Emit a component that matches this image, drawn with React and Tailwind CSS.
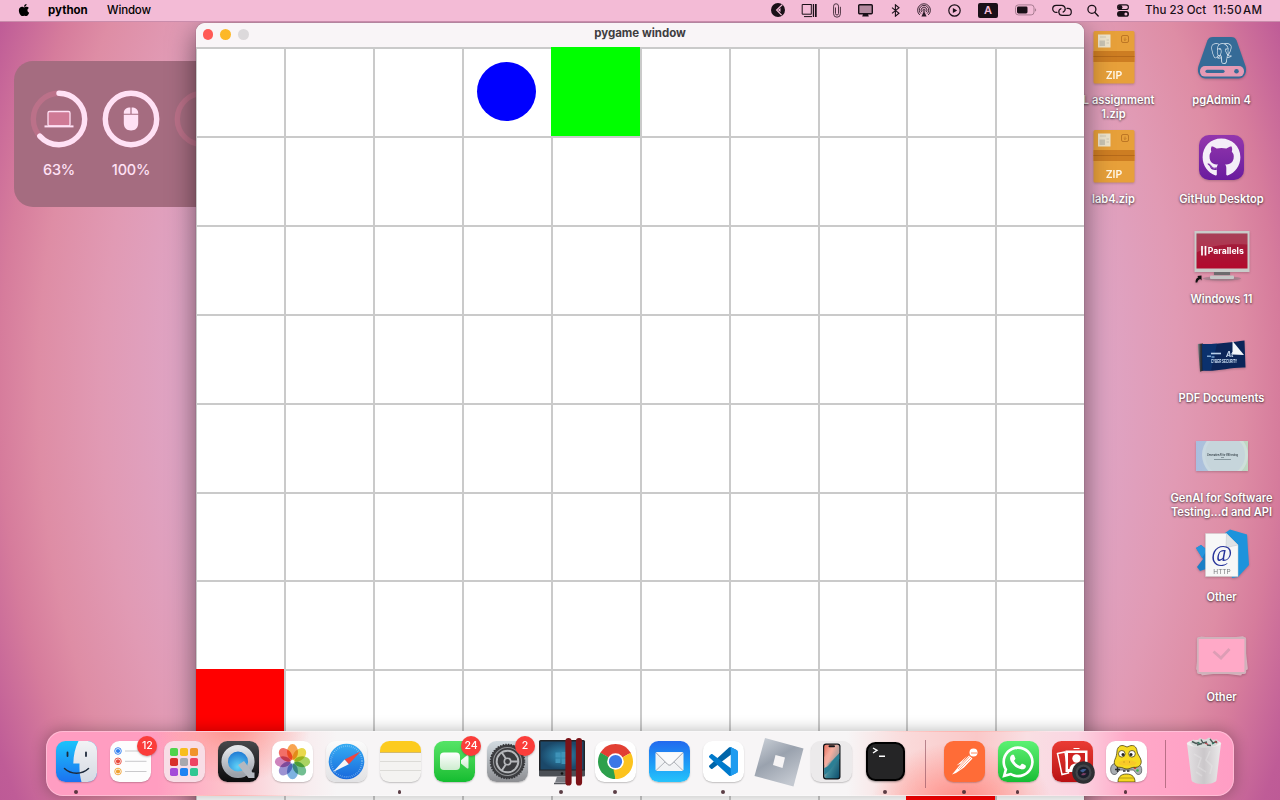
import React from "react";
import { FaApple, FaGithub, FaWhatsapp } from "react-icons/fa";
import { SiPostgresql } from "react-icons/si";

/* ---------- menu bar ---------- */

const MenuIcon = ({ w, children }) => (
  <div className={`flex h-full items-center justify-center ${w}`}>{children}</div>
);

function MenuBar() {
  return (
    <header className="relative z-40 flex h-[21.5px] w-full items-center border-b border-[#c98cab] bg-[#f3bbd6] text-[11.5px] text-[#1a1018]">
      <div className="flex w-[48px] justify-center">
        <FaApple className="h-[14px] w-[14px] text-black" />
      </div>
      <div className="w-[59px] font-bold text-black">python</div>
      <div className="w-[655px] font-medium tracking-[-0.15px] text-black">Window</div>
      <MenuIcon w="w-[32px]">
        <svg width="14" height="14" viewBox="0 0 14 14">
          <circle cx="7" cy="7" r="7" fill="#1a1018" />
          <path d="M11.200 1.800 5.600 7l5 5.200" stroke="#f3bbd6" strokeWidth="1.200" fill="none" />
          <path d="M9.500 5v4L6.800 7z" fill="#f3bbd6" />
        </svg>
      </MenuIcon>
      <MenuIcon w="w-[30px]">
        <svg width="16" height="15" viewBox="0 0 16 15" fill="none" stroke="#1a1018">
          <path d="M10 1.500H1.200v9.700H10M3 13.600h8M10.300 1v10.500" strokeWidth="1" />
          <path d="M12.400 1v13" strokeWidth="1.200" />
          <path d="M14.800 1v13" strokeWidth="1.800" />
        </svg>
      </MenuIcon>
      <MenuIcon w="w-[26px]">
        <svg width="8" height="15" viewBox="0 0 8 15" fill="none" stroke="#3a2531" strokeWidth=".9">
          <path d="M2.500 4.500v6a1.500 1.500 0 0 0 3 0V3.200a2.400 2.400 0 0 0-4.900 0v7.600a3.400 3.400 0 0 0 6.800 0V3.800" />
        </svg>
      </MenuIcon>
      <MenuIcon w="w-[30px]">
        <svg width="15" height="13" viewBox="0 0 15 13">
          <rect x=".7" y=".7" width="13.600" height="9" rx="1" fill="#b48a9f" stroke="#1a1018" strokeWidth="1.400" />
          <path d="M5 10h5l.8 2.500H4.200z" fill="#1a1018" />
        </svg>
      </MenuIcon>
      <MenuIcon w="w-[30px]">
        <svg width="9" height="13" viewBox="0 0 9 13" fill="none" stroke="#1a1018" strokeWidth="1.100">
          <path d="M1 3.600l7 5.600-3.600 3V.8L8 3.800 1 9.400" />
        </svg>
      </MenuIcon>
      <MenuIcon w="w-[28px]">
        <svg width="14" height="14" viewBox="0 0 14 14" fill="none" stroke="#2a1a26" strokeWidth=".9">
          <path d="M2.800 12a6.400 6.400 0 1 1 8.400 0" />
          <path d="M3.900 10.600a4.700 4.700 0 1 1 6.200 0" />
          <path d="M5 9.200a2.900 2.900 0 1 1 4 0" />
          <circle cx="7" cy="7.200" r="1.100" />
          <path d="M7 8 9.600 13.400H4.400z" fill="#2a1a26" stroke="none" />
        </svg>
      </MenuIcon>
      <MenuIcon w="w-[32px]">
        <svg width="13" height="13" viewBox="0 0 13 13">
          <circle cx="6.500" cy="6.500" r="5.700" fill="none" stroke="#1a1018" strokeWidth="1.200" />
          <path d="M4.900 3.900v5.200L9.200 6.500z" fill="#1a1018" />
        </svg>
      </MenuIcon>
      <MenuIcon w="w-[36px]">
        <div className="flex h-[14.500px] w-[19.500px] items-center justify-center rounded-[2px] bg-[#1a1018] text-[11px] font-semibold text-[#f3bbd6]">A</div>
      </MenuIcon>
      <MenuIcon w="w-[40px]">
        <svg width="22" height="12" viewBox="0 0 22 12">
          <rect x=".5" y=".9" width="18.500" height="10" rx="2.800" fill="none" stroke="#a77c91" />
          <rect x="2" y="2.400" width="10.500" height="7" rx="1.400" fill="#1a1018" />
          <path d="M20 4.200v3.400c1.600-.5 1.600-2.900 0-3.400z" fill="#a77c91" />
        </svg>
      </MenuIcon>
      <MenuIcon w="w-[32px]">
        <svg width="20" height="13" viewBox="0 0 20 13" fill="none" stroke="#1a1018" strokeWidth="1.200" strokeLinecap="round">
          <path d="M5 8.400h-.8a3.500 3.500 0 0 1 0-7h5.600a3.500 3.500 0 0 1 1.300 6.700" />
          <path d="M15 4.400h.8a3.500 3.500 0 0 1 0 7h-5.600a3.500 3.500 0 0 1-1.300-6.700" />
        </svg>
      </MenuIcon>
      <MenuIcon w="w-[30px]">
        <svg width="12" height="13" viewBox="0 0 12 13" fill="none" stroke="#1a1018" strokeWidth="1.300" strokeLinecap="round">
          <circle cx="4.900" cy="5.300" r="4" />
          <path d="M7.900 8.500 11.200 12" />
        </svg>
      </MenuIcon>
      <MenuIcon w="w-[29px]">
        <svg width="12" height="13" viewBox="0 0 12 13">
          <rect x=".6" y=".9" width="10.800" height="4.600" rx="2.300" fill="#f3bbd6" stroke="#1a1018" strokeWidth="1.100" />
          <circle cx="3.200" cy="3.200" r="2.200" fill="#1a1018" />
          <rect x="0" y="7" width="12" height="5.800" rx="2.900" fill="#1a1018" />
          <circle cx="8.900" cy="9.900" r="1.500" fill="#f3bbd6" />
        </svg>
      </MenuIcon>
      <div className="ml-2 flex items-center whitespace-nowrap font-medium">
        <span className="w-[68px]">Thu 23 Oct</span>
        <span className="tracking-[0.25px]">11:50&#8202;AM</span>
      </div>
    </header>
  );
}

/* ---------- battery widget ---------- */

function Ring({ percent, children, label }) {
  const c = 2 * Math.PI * 25.7;
  return (
    <div className="flex w-[72px] shrink-0 flex-col items-center">
      <svg width="58" height="58" viewBox="0 0 58 58">
        <circle cx="29" cy="29" r="25.700" fill="none" stroke="#bb7189" strokeWidth="5.400" />
        {percent > 0 && (
          <circle cx="29" cy="29" r="25.700" fill="none" stroke="#ffe1f5" strokeWidth="5.400" strokeLinecap={percent < 100 ? "round" : "butt"} strokeDasharray={`${(c * percent) / 100} ${c}`} transform="rotate(-90 29 29)" />
        )}
        {children}
      </svg>
      <div className="mt-[12px] text-[14.500px] leading-[20px] font-medium tracking-[-0.200px] text-[#ffe1f5]">{label}</div>
    </div>
  );
}

function BatteryWidget() {
  return (
    <section className="absolute top-[39.500px] left-[14px] z-10 flex h-[146px] w-[300px] rounded-[19px] bg-[#a56c80] pt-[28.500px] pl-[9px]">
      <Ring percent={63} label="63%">
        <rect x="18" y="21.500" width="22" height="14.500" rx="1.500" fill="#cf7a96" stroke="#ffe1f5" strokeWidth="1.300" />
        <path d="M14.500 36.400h29" stroke="#ffe1f5" strokeWidth="2" />
      </Ring>
      <Ring percent={100} label="100%">
        <path d="M28.400 17.400v6.300h-6.600v-.7c0-3.600 2.600-5.600 6.600-5.600zM29.600 17.400v6.300h6.600v-.7c0-3.600-2.600-5.600-6.600-5.600z" fill="#ffe1f5" />
        <path d="M21.800 24.800h14.400V33c0 5-2.700 7.400-7.200 7.400s-7.200-2.400-7.200-7.400z" fill="#ffe1f5" />
      </Ring>
      <Ring percent={0} label="" />
    </section>
  );
}

/* ---------- pygame window ---------- */

const RED_CELLS = [70, 88];
const GREEN_CELL = 4;
const BALL_CELL = 3;

function Cell({ index }) {
  const border = "border-t-2 border-l-2 border-[#cacaca]";
  if (index === GREEN_CELL) return <div className="bg-[#00ff00]" />;
  if (RED_CELLS.includes(index)) return <div className="bg-[#ff0000]" />;
  if (index === BALL_CELL)
    return (
      <div className={`flex items-center justify-center pr-[1px] pb-[2px] ${border}`}>
        <div className="h-[59px] w-[59px] rounded-full bg-[#0000ff]" />
      </div>
    );
  return <div className={border} />;
}

function PygameWindow() {
  return (
    <section className="absolute top-[1.500px] left-[196px] z-20 h-[900px] w-[888px] overflow-hidden rounded-t-[9px] bg-white shadow-[0_8px_28px_rgba(0,0,0,0.5),0_0_1px_rgba(0,0,0,0.6)]">
      <div className="flex h-[24px] items-center bg-[#f9f5f7]">
        <div className="flex w-[60px] items-center gap-[7.300px] pb-[1px] pl-[6.500px]">
          <span className="h-[10.500px] w-[10.500px] rounded-full bg-[#ff5a55]" />
          <span className="h-[10.500px] w-[10.500px] rounded-full bg-[#fdb827]" />
          <span className="h-[10.500px] w-[10.500px] rounded-full bg-[#dcd9db]" />
        </div>
        <div className="flex-1 pr-[60px] pb-[2px] text-center text-[11.500px] font-bold text-[#403d3f]">pygame window</div>
      </div>
      <div className="-ml-[0.800px] grid h-[889px] w-[889px] grid-cols-10 grid-rows-10">
        {Array.from({ length: 100 }, (_, i) => (
          <Cell key={i} index={i} />
        ))}
      </div>
    </section>
  );
}

/* ---------- desktop icons ---------- */

function ZipIcon() {
  return (
    <svg className="mb-[2px]" width="42" height="54" viewBox="0 0 42 54">
      <rect x=".5" y="1" width="41" height="52.500" rx="1.500" fill="#e7a03a" />
      <rect x=".5" y="21" width="41" height="11" fill="#cd7d22" />
      <path d="M.5 26.500h41" stroke="#b5691a" strokeWidth="1" />
      <rect x="5" y="4.500" width="12.500" height="13" fill="#ede3cb" />
      <rect x="6.500" y="10.500" width="5.500" height="5.500" fill="#c9c4b4" />
      <path d="M7 7h6M13.500 10h2.500M13.500 13h2.500" stroke="#cfc7b2" />
      <rect x="28.500" y="5.500" width="7" height="7" rx="1.500" fill="none" stroke="#bd7624" />
      <path d="M32 7.500v3M30.700 9.300 32 10.600l1.300-1.300" stroke="#bd7624" fill="none" strokeWidth=".8" />
      <text x="21" y="48.500" textAnchor="middle" fontFamily="Inter, sans-serif" fontSize="10.500" fontWeight="600" fill="#fff8e8">ZIP</text>
    </svg>
  );
}

function PgAdminIcon() {
  return (
    <div className="relative flex h-[44px] w-[50px] justify-center">
      <svg className="absolute inset-0" width="50" height="44" viewBox="0 0 50 44">
        <path d="M16 1h18c3 0 4.500 1 5.600 3.600L48.500 30c2 6-1 12.500-7 12.500h-33c-6 0-9-6.500-7-12.500L10.400 4.600C11.500 2 13 1 16 1z" fill="#356b97" />
        <rect x="3" y="30" width="44" height="10.600" rx="5" fill="#e59ab4" />
        <path d="M10 35.300h16" stroke="#356b97" strokeWidth="3.200" strokeLinecap="round" />
        <circle cx="39.500" cy="35.300" r="2.300" fill="#356b97" />
      </svg>
      <SiPostgresql className="relative mt-[7px] h-[21px] w-[21px] text-[#e6eef5]" />
    </div>
  );
}

function GithubIcon() {
  return (
    <div className="mt-[1px] flex h-[45px] w-[45px] items-center justify-center rounded-[10px] bg-linear-to-b from-[#9436ad] to-[#6a1b9e]">
      <FaGithub className="h-[39px] w-[39px] text-[#f4eef8]" />
    </div>
  );
}

function ParallelsVmIcon() {
  return (
    <svg width="56" height="54" viewBox="0 0 56 54">
      <defs>
        <linearGradient id="vm" x1="0" y1="0" x2="0" y2="1">
          <stop offset="0" stopColor="#9c2540" />
          <stop offset="1" stopColor="#b3092d" />
        </linearGradient>
      </defs>
      <rect x=".5" y="1" width="55" height="41" fill="#c9cbc9" />
      <rect x="2.500" y="3.500" width="51" height="35" fill="url(#vm)" />
      <path d="M2.500 3.500h51v11c-20-1-35 0-51 8z" fill="#fff" opacity=".12" />
      <path d="M20 42h16v3H20z" fill="#6d6a6d" />
      <ellipse cx="28" cy="48.500" rx="19" ry="2.200" fill="#8f7a84" opacity=".6" />
      <rect x="16" y="45.500" width="24" height="3.500" rx="1" fill="#c6c6c6" />
      <path d="M8 16v9.500M11.500 16v9.500" stroke="#fff" strokeWidth="1.700" />
      <text x="13.800" y="24" fontFamily="Inter, sans-serif" fontWeight="700" fontSize="8.600" fill="#fff" textLength="36" lengthAdjust="spacingAndGlyphs">Parallels</text>
      <path d="M1.500 52.500c0-3 1-4.500 2.800-5.200l-1-1.300 4.200-.5v5l-1.200-1.500c-1.800.7-2.600 1.800-3 3.500z" fill="#111" />
    </svg>
  );
}

function PdfStackIcon() {
  return (
    <svg width="50" height="34" viewBox="0 0 50 34">
      <defs>
        <linearGradient id="pf" x1="0" y1="0" x2="1" y2="0"><stop offset="0" stopColor="#8a8f94" /><stop offset=".5" stopColor="#33363b" /><stop offset="1" stopColor="#15181f" /></linearGradient>
      </defs>
      <path d="M.8 5 6 4.500l.5 27L3 32.800z" fill="url(#pf)" />
      <path d="M5 5C20 5.500 35 3 47.500 1.500l1 27C33 28 20 33 5.500 31.500z" fill="#0b2559" />
      <path d="M5 5c5 .2 10 0 15-.6L14 31.500l-8.500 0z" fill="#0c3a7c" opacity=".6" />
      <text x="29" y="18" fontFamily="Inter, sans-serif" fontSize="7" fontWeight="700" fontStyle="italic" fill="#c7d8ee">At</text>
      <path d="M14 14.500h10" stroke="#b9d0ea" strokeWidth="1.600" />
      <path d="M10 17.300h4M14.500 18h3" stroke="#7ea4cf" strokeWidth="1.600" />
      <text x="14" y="24.300" fontFamily="Liberation Sans, sans-serif" fontSize="6" fontWeight="700" fill="#d9ecff" textLength="26" lengthAdjust="spacingAndGlyphs">CYBER SECURITY</text>
      <path d="M35.500 2 47 16l-11.500-.5z" fill="#f3f6fa" />
    </svg>
  );
}

function SlideIcon() {
  return (
    <svg className="mt-[1px]" width="52" height="30" viewBox="0 0 52 30">
      <defs>
        <linearGradient id="sl" x1="0" y1="0" x2="1" y2="0">
          <stop offset="0" stopColor="#a9bde0" />
          <stop offset="1" stopColor="#bfd8c0" />
        </linearGradient>
        <clipPath id="slc"><rect width="52" height="30" /></clipPath>
      </defs>
      <g clipPath="url(#slc)">
        <rect width="52" height="30" fill="url(#sl)" />
        <circle cx="29" cy="14" r="23" fill="#d6e2e4" opacity=".7" />
        <circle cx="29" cy="14" r="20" fill="#c6d5db" />
      </g>
      <text x="11" y="14.700" fontFamily="Inter, sans-serif" fontSize="3" fontWeight="600" fill="#26323a" textLength="31" lengthAdjust="spacingAndGlyphs">Generative AI for SW testing</text>
      <path d="M25 16.500h3M18 18.500h17" stroke="#6c7c84" strokeWidth=".7" />
    </svg>
  );
}

function HttpStackIcon() {
  return (
    <svg className="mb-[2px]" width="54" height="50" viewBox="0 0 54 50">
      <path d="M1 19l5-3 14 11v10L5 42l-3-4 6-8z" fill="#1b7fc6" />
      <path d="M1 19l5-3 6 5-5 8z" fill="#2595dd" />
      <path d="M30 4 35 .5l17 5L54 36 43 48l-6 1z" fill="#1d93dc" />
      <path d="M10.500 4.500h21L43 16v31.500H10.500z" fill="#f7f7f7" stroke="#cfcfcf" strokeWidth=".5" />
      <path d="M31.500 4.500 43 16 31 18.500z" fill="#dfe3e6" stroke="#c2c7cb" strokeWidth=".5" />
      <text x="26.500" y="31.500" textAnchor="middle" fontFamily="Liberation Serif, serif" fontSize="23" fontStyle="italic" fill="#27339a">@</text>
      <text x="27" y="44.500" textAnchor="middle" fontFamily="Inter, sans-serif" fontSize="6.500" fill="#77797c">HTTP</text>
    </svg>
  );
}

function FolderStackIcon() {
  return (
    <svg className="mt-[1px]" width="54" height="46" viewBox="0 0 54 46">
      <rect x="3" y="6" width="46" height="34" rx="1.500" fill="#dcb0bd" transform="rotate(7 26 22)" />
      <rect x="4" y="6" width="47" height="34" rx="1.500" fill="#d8b2be" transform="rotate(-7 26 22)" />
      <rect x="2.800" y="5" width="47.500" height="35" rx="1" fill="#ffa9c7" stroke="#cfb2bb" strokeWidth="1.800" />
      <path d="M18.500 18.500l7.500 6.500 8.500-9" fill="none" stroke="#dd9db5" strokeWidth="2.800" />
    </svg>
  );
}

function DesktopItem({ icon, lines }) {
  return (
    <div className="flex h-[99.600px] w-[108px] shrink-0 flex-col items-center">
      <div className="flex h-[62px] w-full items-center justify-center drop-shadow-[0_1px_1px_rgba(0,0,0,0.2)]">{icon}</div>
      <div className="mt-[4px] text-center text-[11.100px] leading-[14.300px] font-semibold whitespace-nowrap text-white [text-shadow:0_1px_2px_rgba(0,0,0,0.55),0_0_3px_rgba(0,0,0,0.3)]">
        {lines.map((l) => (
          <div key={l}>{l}</div>
        ))}
      </div>
    </div>
  );
}

function DesktopIcons() {
  return (
    <div className="flex justify-end pt-[5px] pr-[4.500px]">
      <div className="flex flex-col">
        <DesktopItem icon={<ZipIcon />} lines={["ML assignment", "1.zip"]} />
        <DesktopItem icon={<ZipIcon />} lines={["lab4.zip"]} />
      </div>
      <div className="flex flex-col">
        <DesktopItem icon={<PgAdminIcon />} lines={["pgAdmin 4"]} />
        <DesktopItem icon={<GithubIcon />} lines={["GitHub Desktop"]} />
        <DesktopItem icon={<ParallelsVmIcon />} lines={["Windows 11"]} />
        <DesktopItem icon={<PdfStackIcon />} lines={["PDF Documents"]} />
        <DesktopItem icon={<SlideIcon />} lines={["GenAI for Software", "Testing...d and API"]} />
        <DesktopItem icon={<HttpStackIcon />} lines={["Other"]} />
        <DesktopItem icon={<FolderStackIcon />} lines={["Other"]} />
      </div>
    </div>
  );
}

/* ---------- dock ---------- */

function Tile({ className = "", children }) {
  return (
    <div className={`flex h-[41px] w-[41px] items-center justify-center overflow-hidden rounded-[9.500px] shadow-[0_1px_1.500px_rgba(0,0,0,0.22)] ${className}`}>
      {children}
    </div>
  );
}

function Finder() {
  return (
    <Tile>
      <svg width="41" height="41" viewBox="0 0 41 41">
        <defs>
          <linearGradient id="fa" x1="0" y1="0" x2="0" y2="1"><stop offset="0" stopColor="#1cc3fb" /><stop offset="1" stopColor="#1b72f0" /></linearGradient>
          <linearGradient id="fb" x1="0" y1="0" x2="0" y2="1"><stop offset="0" stopColor="#f2f2f5" /><stop offset="1" stopColor="#d5dbe3" /></linearGradient>
        </defs>
        <rect width="41" height="41" fill="url(#fa)" />
        <path d="M22.500 0C19 7 17.500 14 17.300 22.500h6.200c-.3 6.500.4 12.500 2 18.500H41V0z" fill="url(#fb)" />
        <path d="M11.500 11.500v3.500M30 11.500v3.500" stroke="#1d2a3b" strokeWidth="1.800" strokeLinecap="round" />
        <path d="M8.500 27.500c6.500 6.200 17.500 6.200 24 0" fill="none" stroke="#1d2a3b" strokeWidth="1.500" strokeLinecap="round" />
      </svg>
    </Tile>
  );
}

function Reminders() {
  const rows = [["#2f7ef0", 10], ["#e94b3c", 20.3], ["#f0a030", 30.5]];
  return (
    <Tile className="bg-[#fdfdfd]">
      <svg width="41" height="41" viewBox="0 0 41 41">
        {rows.map(([c, y]) => (
          <g key={y}>
            <circle cx="8" cy={y} r="3.300" fill="none" stroke={c} strokeWidth=".9" />
            <circle cx="8" cy={y} r="2.100" fill={c} />
            <path d={`M15 ${y}h21.500`} stroke="#c9c9cb" strokeWidth="1" />
          </g>
        ))}
      </svg>
    </Tile>
  );
}

function Launchpad() {
  const colors = ["bg-[#4fd34c]", "bg-[#f8bd1c]", "bg-[#f0922a]", "bg-[#d9302c]", "bg-[#a8a8ae]", "bg-[#ee4363]", "bg-[#a44bd8]", "bg-[#1f83f2]", "bg-[#30c793]"];
  return (
    <Tile className="bg-[#f8dde6]">
      <div className="grid grid-cols-3 gap-[2px]">
        {colors.map((c) => (
          <div key={c} className={`h-[8px] w-[8px] rounded-[1.800px] ${c}`} />
        ))}
      </div>
    </Tile>
  );
}

function QuickTime() {
  return (
    <Tile className="bg-linear-to-b from-[#48494c] to-[#0c0c0e]">
      <svg width="41" height="41" viewBox="0 0 41 41">
        <defs>
          <linearGradient id="qa" x1="0" y1="0" x2="0" y2="1"><stop offset="0" stopColor="#e4e6ea" /><stop offset="1" stopColor="#9ba1aa" /></linearGradient>
          <radialGradient id="qb" cx=".5" cy=".7" r=".7"><stop offset="0" stopColor="#61d4f8" /><stop offset="1" stopColor="#1167cc" /></radialGradient>
        </defs>
        <circle cx="20" cy="20.500" r="13.300" fill="url(#qb)" stroke="url(#qa)" strokeWidth="6.500" />
        <path d="M20 24l6-4 8.500 11.500h2V37h-6z" fill="#b3b8c0" />
      </svg>
    </Tile>
  );
}

function Photos() {
  const petals = ["#f79432", "#e5d12c", "#9bcb45", "#59b37e", "#67a5dc", "#8b7fc9", "#c66db0", "#f0564c"];
  return (
    <Tile className="bg-white">
      <svg width="41" height="41" viewBox="0 0 41 41">
        {petals.map((c, i) => (
          <ellipse key={c} cx="20.500" cy="11" rx="5.500" ry="7.900" fill={c} opacity=".85" transform={`rotate(${i * 45} 20.500 20.700)`} style={{ mixBlendMode: "multiply" }} />
        ))}
      </svg>
    </Tile>
  );
}

function Safari() {
  return (
    <Tile className="bg-linear-to-b from-[#fbfbfb] to-[#e2e2e4]">
      <svg width="41" height="41" viewBox="0 0 41 41">
        <defs>
          <linearGradient id="sa" x1="0" y1="0" x2="0" y2="1"><stop offset="0" stopColor="#36adf3" /><stop offset="1" stopColor="#1868dc" /></linearGradient>
        </defs>
        <circle cx="20.500" cy="20.500" r="17.800" fill="url(#sa)" />
        <circle cx="20.500" cy="20.500" r="15.500" fill="none" stroke="#b5dcf8" strokeWidth="1.800" strokeDasharray=".5 1.530" opacity=".8" />
        <path d="M34.500 10.500 22.800 23.300 18.600 18.400z" fill="#f0453f" />
        <path d="M7 31 18.600 18.400l4.200 4.900z" fill="#f6f6f6" />
      </svg>
    </Tile>
  );
}

function Notes() {
  return (
    <Tile className="bg-[#f4f3f1]">
      <svg width="41" height="41" viewBox="0 0 41 41">
        <rect width="41" height="11" fill="#fccb1f" />
        <path d="M0 11.500h41" stroke="#c9a94a" strokeWidth=".8" />
        <path d="M0 20.500h41M0 29.500h41" stroke="#dcdbd7" />
      </svg>
    </Tile>
  );
}

function FaceTime() {
  return (
    <Tile className="bg-linear-to-b from-[#55e466] to-[#12bd30]">
      <svg width="41" height="41" viewBox="0 0 41 41">
        <defs>
          <linearGradient id="ft" x1="0" y1="0" x2="0" y2="1"><stop offset="0" stopColor="#ffffff" /><stop offset="1" stopColor="#cdeccf" /></linearGradient>
        </defs>
        <rect x="6" y="11.500" width="20" height="17.500" rx="4" fill="url(#ft)" />
        <path d="M27 19.300 32.800 14.600c.9-.7 1.700-.3 1.700.8v11c0 1.100-.8 1.500-1.700.8L27 22.500z" fill="url(#ft)" />
      </svg>
    </Tile>
  );
}

function Settings() {
  return (
    <Tile className="bg-linear-to-b from-[#d3dce2] to-[#8d8e92]">
      <svg width="41" height="41" viewBox="0 0 41 41" fill="none">
        <circle cx="20.500" cy="20.500" r="17" fill="#3d3e41" />
        <circle cx="20.500" cy="20.500" r="17" stroke="#303134" strokeWidth="1.600" strokeDasharray="1.300 1.370" />
        <circle cx="20.500" cy="20.500" r="14" stroke="#909295" strokeWidth="1.100" />
        <circle cx="20.500" cy="20.500" r="10.800" fill="#3a3b3e" stroke="#b5b7ba" strokeWidth="2" />
        <circle cx="20.500" cy="20.500" r="3.200" stroke="#b5b7ba" strokeWidth="1.600" />
        <path d="M18.800 17.500 14.500 11M24 20.500h8M18.800 23.500 14.500 30" stroke="#b5b7ba" strokeWidth="1.900" />
      </svg>
    </Tile>
  );
}

function ParallelsDesktop() {
  return (
    <svg width="48" height="50" viewBox="0 0 48 50">
      <defs>
        <radialGradient id="pd"><stop offset="0" stopColor="#3290b7" /><stop offset="1" stopColor="#1b4869" /></radialGradient>
      </defs>
      <rect x="1" y="3" width="46" height="36" rx="1.500" fill="#202226" />
      <rect x="2.500" y="4.500" width="43" height="28" fill="url(#pd)" />
      <path d="M1 33.500h46V38a1.500 1.500 0 0 1-1.500 1.500h-43A1.500 1.500 0 0 1 1 38z" fill="#4b4f55" />
      <path d="M19 39.500h10l1.500 6H17z" fill="#7c7f85" />
      <path d="M16 46.500h16" stroke="#54575c" strokeWidth="1.500" />
      <circle cx="24" cy="36.500" r="1.300" fill="#111" />
      <path d="M17.500 15.500h5v5h-5zM23.500 15h5v5.500h-5zM17.500 21.500h5v4.500h-5zM23.500 21.500h5V27h-5z" fill="#3f93b8" />
      <path d="M30.500 4v41.500M41 4v41.500" stroke="#7c1318" strokeWidth="6.200" strokeLinecap="round" />
    </svg>
  );
}

function Chrome() {
  return (
    <Tile className="bg-white">
      <svg width="41" height="41" viewBox="-20.500 -20.500 41 41">
        <path d="M0 0-15.150-8.750A17.500 17.500 0 0 1 15.150-8.750z" fill="#e23f33" />
        <path d="M0 0-15.150-8.750A17.500 17.500 0 0 0 0 17.500z" fill="#2da04c" />
        <path d="M0 0 15.150-8.750A17.500 17.500 0 0 1 0 17.500z" fill="#fcc31e" />
        <path d="M0-8.200h15.400L15.150-8.750-.5-12z" fill="#e23f33" />
        <path d="M-15.150-8.750-7 4.100 0 0z" fill="#2da04c" />
        <path d="M7.100 4.100 0 17.500-2 8z" fill="#fcc31e" />
        <circle r="8.300" fill="#fff" />
        <circle r="6.600" fill="#3b78e7" />
      </svg>
    </Tile>
  );
}

function Mail() {
  return (
    <Tile className="bg-linear-to-b from-[#2369ee] to-[#27c3fb]">
      <svg width="41" height="41" viewBox="0 0 41 41" fill="none">
        <rect x="6.500" y="11" width="28" height="19" rx="1.800" fill="#f1f3f5" />
        <path d="M7 29.500 17 20M34 29.500 24 20" stroke="#a8adb3" strokeWidth=".9" />
        <path d="M7 11.700 18.600 23.300c1.200 1.100 2.600 1.100 3.800 0L34 11.700" fill="#fafbfc" stroke="#8e949b" strokeWidth=".9" />
      </svg>
    </Tile>
  );
}

function VsCode() {
  return (
    <Tile className="bg-white">
      <svg width="29" height="29" viewBox="0 0 100 100">
        <path d="M96.500 10.800 75.900.9c-2.400-1.200-5.200-.7-7.100 1.200L1.300 63.600c-1.800 1.700-1.800 4.500 0 6.100l5.500 5c1.500 1.400 3.700 1.500 5.300.2L93.400 13.300c2.700-2.100 6.600-.1 6.600 3.300v-.2c0-2.400-1.400-4.600-3.500-5.600z" fill="#0065a9" />
        <path d="M96.500 89.200 75.900 99.100c-2.400 1.200-5.200.7-7.100-1.200L1.300 36.400c-1.800-1.700-1.800-4.500 0-6.100l5.500-5c1.500-1.400 3.700-1.500 5.300-.2l81.300 61.600c2.700 2.100 6.600.1 6.600-3.300v.2c0 2.400-1.400 4.600-3.500 5.600z" fill="#007acc" />
        <path d="M75.900 99.100c-2.400 1.200-5.200.7-7.100-1.200 2.300 2.300 6.200.7 6.200-2.600V4.700c0-3.300-3.900-4.900-6.200-2.600 1.900-1.900 4.700-2.300 7.100-1.200l20.600 9.900c2.200 1 3.500 3.200 3.500 5.600v67.200c0 2.400-1.400 4.600-3.500 5.600z" fill="#1f9cf0" />
      </svg>
    </Tile>
  );
}

function Roblox() {
  return (
    <svg className="ml-[2px]" width="50" height="50" viewBox="0 0 50 50">
      <defs>
        <linearGradient id="rb" x1="0" y1="0" x2=".6" y2="1"><stop offset="0" stopColor="#d0d5dc" /><stop offset=".5" stopColor="#9aa2ae" /><stop offset="1" stopColor="#c3c8d0" /></linearGradient>
      </defs>
      <path d="M11 1 49.500 11.500 39.500 49.500.5 39z" fill="url(#rb)" />
      <path d="M21.500 18 31 20.500 28.500 31 19 28z" fill="#f6f4f5" />
    </svg>
  );
}

function IphoneMirroring() {
  return (
    <Tile className="bg-[#eceaeb]">
      <svg width="41" height="41" viewBox="0 0 41 41">
        <defs>
          <linearGradient id="im" x1="0" y1="0" x2="1" y2="1"><stop offset="0" stopColor="#e96f5d" /><stop offset=".35" stopColor="#f5b7a8" /><stop offset=".55" stopColor="#3c8a9b" /><stop offset="1" stopColor="#0d4d6b" /></linearGradient>
        </defs>
        <rect x="12" y="2.500" width="17.500" height="36" rx="3" fill="#111418" />
        <rect x="13.200" y="3.700" width="15.100" height="33.600" rx="2" fill="url(#im)" />
        <path d="M13.200 27c5-1 9-9 15.100-14v5c-6 5-9 13-15.100 16z" fill="#2b7f95" />
        <path d="M13.200 24c4-1 9-5 15.100-12V5.700c0-1-1-2-2-2h-1L13.200 16z" fill="#f4aa9b" opacity=".7" />
        <rect x="17.500" y="4.300" width="6.500" height="2" rx="1" fill="#111418" />
      </svg>
    </Tile>
  );
}

function Terminal() {
  return (
    <div className="flex h-[39px] w-[39px] rounded-[9.500px] border-[2.500px] border-black bg-[#252526] pt-[2px] pl-[3.500px] shadow-[0_1px_2px_rgba(0,0,0,0.4)]">
      <svg width="16" height="14" viewBox="0 0 16 14" fill="none" stroke="#fff" strokeWidth="1.400">
        <path d="M1 2l4 2.300-4 2.700M7 10.200h6" />
      </svg>
    </div>
  );
}

function Postman() {
  return (
    <Tile className="bg-[#ff6c37]">
      <svg width="41" height="41" viewBox="0 0 41 41">
        <circle cx="29.500" cy="11.500" r="4" fill="#fff" />
        <path d="M27 12h6" stroke="#ff6c37" strokeWidth=".8" />
        <path d="M25 14.500 28.500 17.500 20 26.500 12 32l-4 1.500 1.500-1.800L15 25z" fill="#fff" />
        <path d="M27 17 15.500 28.500M25.500 15.500 14 28" stroke="#ff6c37" strokeWidth=".6" />
        <path d="M17 22.500 12.500 24.500l1.500-1.200 9-8.300z" fill="#fff" />
      </svg>
    </Tile>
  );
}

function WhatsApp() {
  return (
    <Tile className="bg-linear-to-b from-[#5cf273] to-[#12bd33]">
      <FaWhatsapp className="h-[36px] w-[36px] text-white" />
    </Tile>
  );
}

function PhotoBooth() {
  return (
    <div className="relative">
      <Tile className="bg-linear-to-b from-[#ea3b34] to-[#b90f12]">
        <svg width="41" height="41" viewBox="0 0 41 41">
          <path d="M5.500 12.500 13 11l3.500 21-6.500 1.500z" fill="none" stroke="#fff" strokeWidth="1.500" />
          <rect x="13.500" y="9.500" width="22" height="21.500" fill="#fff" />
          <rect x="16" y="12" width="17" height="16" fill="#cf2422" />
          <circle cx="24.500" cy="17.500" r="4.200" fill="#fff" />
          <path d="M17.500 28c.5-4 3.500-5.500 7-5.500s6.500 1.500 7 5.500z" fill="#fff" />
          <path d="M21.500 7.500h6" stroke="#fff" />
        </svg>
      </Tile>
      <svg className="absolute top-[20px] left-[20px]" width="23" height="23" viewBox="0 0 23 23">
        <circle cx="11.500" cy="11.500" r="11.300" fill="#2e2f33" />
        <circle cx="11.500" cy="11.500" r="8" fill="#43454a" />
        <circle cx="11.500" cy="11.500" r="5.800" fill="#1a1e2b" />
        <path d="M8 10c1.500-2 4-2.500 6.500-1.500L11 11.500z" fill="#3f5c90" />
        <path d="M9 14c2 .8 4 .3 5.500-1.500L11 12z" fill="#7d3f66" />
      </svg>
    </div>
  );
}

function Pygame() {
  return (
    <Tile className="bg-white">
      <svg width="41" height="41" viewBox="0 0 41 41" stroke="#4b4210" strokeWidth=".8">
        <path d="M12 41c0-4 2-8 8.500-8s8.500 4 8.500 8z" fill="#f5d820" />
        <path d="M13 37h15" stroke="#a8910f" />
        <path d="M5 31c-1.500-6 2-9.500 7-8.500l17 .5c5-.5 7.500 3 6.500 8-.6 3-4.500 3.500-6 .5l-2-2.500h-14l-2 2.500c-1.500 3-5.800 2.500-6.500-.5z" fill="#a9adb3" stroke="#55585d" />
        <path d="M9 28.500h5M11.500 26v5" stroke="#2b2d30" strokeWidth="1.500" />
        <path d="M17 30h2.500M21 30h2.500" stroke="#2b2d30" strokeWidth="1.300" />
        <circle cx="29" cy="26.800" r="1.300" fill="#d33" stroke="none" />
        <circle cx="31.500" cy="29.500" r="1.300" fill="#39b54a" stroke="none" />
        <path d="M11 10c.5-4.500 4-6.500 7.500-5l2.500 1 2.500-1c4-1.500 7 .5 7.500 5 .3 3 2.500 5 3.700 8 2 5.500-2 9-6.700 8.300-2.500-.1-4 1.700-7 1.700s-4.500-1.800-7-1.700c-4.500.2-7-4-5-8 1.300-2.600 1.800-5.300 2-8.300z" fill="#f6da22" />
        <path d="M12 22c4-4 14-4 19 0-2 3-5 2.500-9.500 2.500S14 25 12 22z" fill="#f9c928" stroke="none" />
        <circle cx="15.800" cy="12.800" r="3.300" fill="#fff" />
        <circle cx="26" cy="12.800" r="3.300" fill="#fff" />
        <circle cx="17" cy="13.500" r="1.500" fill="#222" stroke="none" />
        <circle cx="25" cy="13.500" r="1.500" fill="#222" stroke="none" />
        <path d="M18 20.500v1M23.500 20.500v1" stroke="#8a7310" />
      </svg>
    </Tile>
  );
}

function Trash() {
  return (
    <svg className="mb-[2px]" width="38" height="50" viewBox="0 0 38 50">
      <defs>
        <linearGradient id="tr" x1="0" y1="0" x2="1" y2="0"><stop offset="0" stopColor="#e4e1e3" /><stop offset=".5" stopColor="#cbc7ca" /><stop offset="1" stopColor="#ebe9ea" /></linearGradient>
      </defs>
      <path d="M2 7.500 6.500 44c.3 2.500 5.500 4 12.500 4s12.200-1.500 12.500-4L36 7.500z" fill="url(#tr)" />
      <ellipse cx="19" cy="7.500" rx="17.200" ry="3.800" fill="#f0eeef" />
      <path d="M5 7 8 3.500 12 5l3-3 5 2 4-2.500 4 2.500 4-.5 2 3.500-3 2.500-5 1.500-9 .5-8-1z" fill="#d5dad8" />
      <path d="M7 5.500l4 2 3-1M16 3.500l2 3.500 4-1M25 3l3 4 4-1.500M12 9l5-1.500M22 9l4 .5" stroke="#4c5a57" strokeWidth="1.400" fill="none" />
      <path d="M20 7l3 1.500M30 5l2 2" stroke="#b2444c" strokeWidth="1.300" />
      <path d="M13 6.500l2 1M27 8l2-1" stroke="#2f7d62" strokeWidth="1.300" />
      <path d="M9 18l7 4-3 9 8 5M25 15l-4 9 6 6-2 8M11 36l6 4" stroke="#efedef" strokeWidth="1.600" fill="none" opacity=".3" />
    </svg>
  );
}

const Separator = () => (
  <div className="flex h-full w-[25px] items-center justify-center">
    <div className="h-[48px] w-px bg-[#8c4d5b]/60" />
  </div>
);

function DockItem({ children, badge, running }) {
  return (
    <div className="relative flex h-full w-[53.950px] shrink-0 items-center justify-center pb-[4px]">
      {children}
      {badge && (
        <div className="absolute top-[4px] left-[34px] flex h-[20px] w-[20px] items-center justify-center rounded-full bg-[#fb3d3a] text-[10.500px] font-medium text-white shadow-[0_1px_2px_rgba(0,0,0,0.25)]">{badge}</div>
      )}
      {running && <div className="absolute bottom-[1.500px] left-[24.500px] h-[3.500px] w-[3.500px] rounded-full bg-[#4a2a33]/90" />}
    </div>
  );
}

function Dock() {
  return (
    <nav className="absolute top-[731px] left-[46px] z-50 flex h-[65px] w-[1188px] items-center rounded-[17px] border border-white/30 bg-[radial-gradient(ellipse_90px_60px_at_914px_70px,#ff8d86_0%,#ff9d97cc_40%,transparent_100%),radial-gradient(ellipse_80px_60px_at_184px_-8px,#ff8f88_0%,#ff9d9799_45%,transparent_100%),linear-gradient(90deg,#ff9dc2_0px,#ff9dc0_110px,#fdc0ca_175px,#f9e5e8_235px,#f7f5f6_290px,#f7f5f6_800px,#fadada_860px,#fac8c8_930px,#f9dfe3_980px,#fbd5e2_1030px,#ffa9c8_1080px,#ff9dc4_1188px)] pl-[2.500px] shadow-[0_0_14px_2px_rgba(0,0,0,0.24)]">
      <DockItem running><Finder /></DockItem>
      <DockItem badge="12"><Reminders /></DockItem>
      <DockItem><Launchpad /></DockItem>
      <DockItem><QuickTime /></DockItem>
      <DockItem><Photos /></DockItem>
      <DockItem><Safari /></DockItem>
      <DockItem running><Notes /></DockItem>
      <DockItem badge="24"><FaceTime /></DockItem>
      <DockItem badge="2"><Settings /></DockItem>
      <DockItem running><ParallelsDesktop /></DockItem>
      <DockItem running><Chrome /></DockItem>
      <DockItem><Mail /></DockItem>
      <DockItem running><VsCode /></DockItem>
      <DockItem><Roblox /></DockItem>
      <DockItem><IphoneMirroring /></DockItem>
      <DockItem running><Terminal /></DockItem>
      <Separator />
      <DockItem running><Postman /></DockItem>
      <DockItem running><WhatsApp /></DockItem>
      <DockItem><PhotoBooth /></DockItem>
      <DockItem running><Pygame /></DockItem>
      <Separator />
      <div className="-ml-[1.500px] flex h-full">
        <DockItem><Trash /></DockItem>
      </div>
    </nav>
  );
}

export default function App() {
  return (
    <div className="relative h-[800px] w-[1280px] overflow-hidden bg-[radial-gradient(ellipse_700px_900px_at_640px_390px,#dfa6c8_0%,#dfa4c4_66%,#e19ab4_77%,#de8da5_86%,#d67c9c_91.500%,#bf5c97_100%,#b95594_108%)] font-['Inter','Liberation_Sans',sans-serif]">
      <MenuBar />
      <main className="relative h-[778.500px]">
        <BatteryWidget />
        <PygameWindow />
        <DesktopIcons />
      </main>
      <Dock />
    </div>
  );
}
